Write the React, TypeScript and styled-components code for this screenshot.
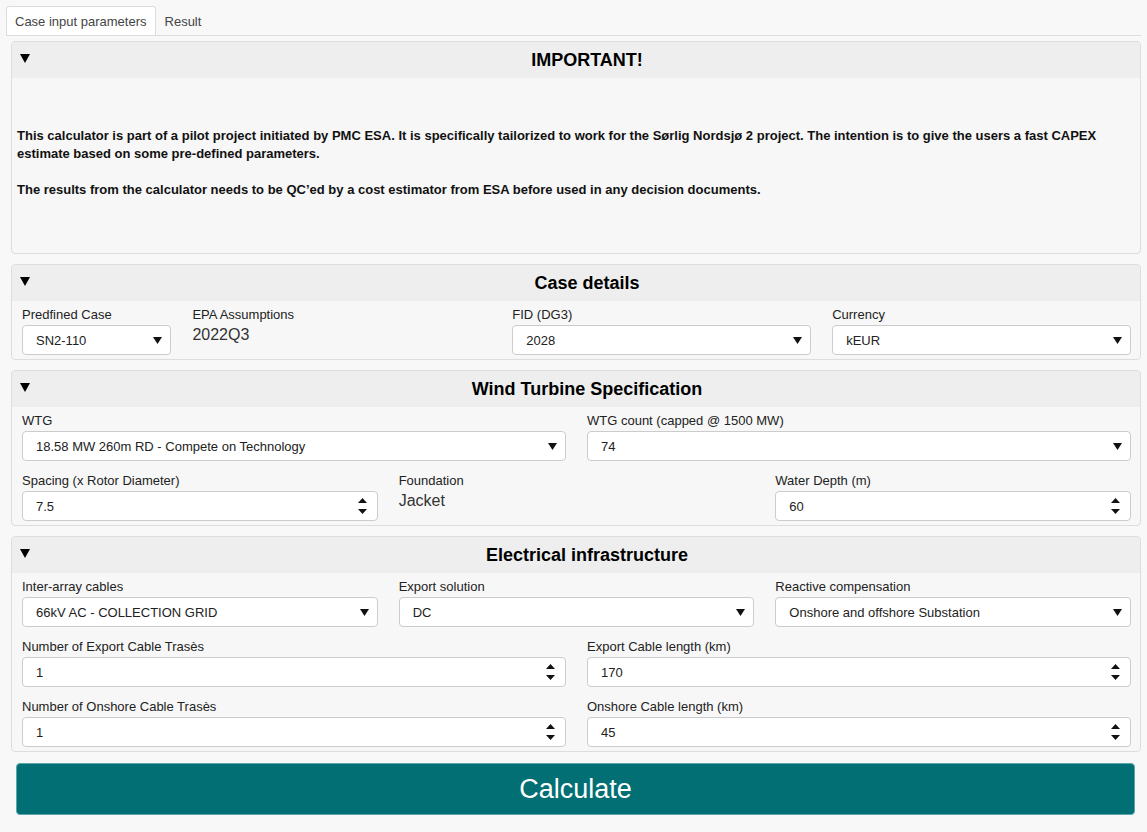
import React from "react";
import styled, { createGlobalStyle } from "styled-components";

const GlobalStyle = createGlobalStyle`
  body {
    margin: 0;
    background: #f8f8f8;
    font-family: "Liberation Sans", Arial, sans-serif;
    color: #222;
  }
`;

const Page = styled.div`
  width: 1147px;
  padding-top: 6px;
  box-sizing: border-box;
`;

const TabList = styled.div`
  display: flex;
  margin: 0 6px;
  border-bottom: 1px solid #dddddd;
  height: 29px;
`;

const Tab = styled.div<{ active?: boolean }>`
  display: flex;
  align-items: center;
  padding: 0 8px;
  font-size: 13px;
  color: #444;
  background: ${({ active }) => (active ? "#ffffff" : "transparent")};
  border: 1px solid ${({ active }) => (active ? "#dddddd" : "transparent")};
  border-bottom: none;
  border-radius: 3px 3px 0 0;
  margin-bottom: -1px;
  height: 29px;
  box-sizing: border-box;
`;

const Content = styled.div`
  padding: 5px 6px 0 11px;
  display: flex;
  flex-direction: column;
  gap: 10px;
`;

const Panel = styled.div`
  border: 1px solid #dddddd;
  border-radius: 4px;
  background: #f7f7f7;
  overflow: hidden;
`;

const PanelHeader = styled.div`
  height: 36px;
  background: #eeeeee;
  display: flex;
  align-items: center;
  padding-left: 8px;
  color: #000;
`;

const Caret = styled.svg`
  flex: none;
  margin-top: -3px;
  margin-right: 4px;
`;

const PanelTitle = styled.div`
  flex: 1;
  text-align: center;
  font-size: 18px;
  font-weight: bold;
`;

const Notice = styled.div`
  padding: 49px 5px 54px;
  font-size: 13px;
  font-weight: bold;
  line-height: 18px;
  color: #111;
  p {
    margin: 0;
  }
  p + p {
    margin-top: 18px;
  }
`;

const PanelBody = styled.div`
  padding: 6px 9px 4px 10px;
  display: flex;
  flex-direction: column;
  gap: 12px;
`;

const Row = styled.div<{ cols: string }>`
  display: grid;
  grid-template-columns: ${({ cols }) => cols};
  column-gap: 21px;
`;

const Field = styled.div`
  display: flex;
  flex-direction: column;
  min-width: 0;
`;

const Label = styled.div`
  font-size: 13px;
  line-height: 16px;
  margin-bottom: 2px;
  color: #222;
`;

const Value = styled.div`
  font-size: 16px;
  line-height: 18px;
  color: #333;
  margin-top: 1px;
`;

const Box = styled.div`
  display: flex;
  align-items: center;
  height: 30px;
  box-sizing: border-box;
  background: #ffffff;
  border: 1px solid #cccccc;
  border-radius: 4px;
  padding-right: 8px;
`;

const NativeSelect = styled.select`
  appearance: none;
  flex: 1;
  min-width: 0;
  height: 100%;
  border: none;
  background: transparent;
  padding: 0 0 0 13px;
  font-family: inherit;
  font-size: 13px;
  color: #222;
  outline: none;
`;

const NumberBox = styled.input`
  flex: 1;
  min-width: 0;
  height: 100%;
  border: none;
  background: transparent;
  padding: 0 0 0 13px;
  font-family: inherit;
  font-size: 13px;
  color: #222;
  outline: none;
`;

const Spinner = styled.div`
  display: flex;
  flex-direction: column;
  gap: 6px;
  margin-right: 2px;
`;

const CalcButton = styled.button`
  margin: 1px 6px 0 5px;
  height: 52px;
  background: #016f74;
  border: 1px solid #5aa6a9;
  border-radius: 4px;
  color: #ffffff;
  font-family: inherit;
  font-size: 27px;
  cursor: pointer;
`;

const Arrow = () => (
  <svg width="9" height="7" viewBox="0 0 9 7">
    <path d="M0 0H9L4.5 7Z" fill="#111" />
  </svg>
);

const Up = () => (
  <svg width="9" height="5" viewBox="0 0 9 5">
    <path d="M0 5H9L4.5 0Z" fill="#111" />
  </svg>
);

const Down = () => (
  <svg width="9" height="5" viewBox="0 0 9 5">
    <path d="M0 0H9L4.5 5Z" fill="#111" />
  </svg>
);

const Select = ({ label, value }: { label: string; value: string }) => (
  <Field>
    <Label>{label}</Label>
    <Box>
      <NativeSelect defaultValue={value}>
        <option>{value}</option>
      </NativeSelect>
      <Arrow />
    </Box>
  </Field>
);

const NumberInput = ({ label, value }: { label: string; value: string }) => (
  <Field>
    <Label>{label}</Label>
    <Box>
      <NumberBox type="text" defaultValue={value} />
      <Spinner>
        <Up />
        <Down />
      </Spinner>
    </Box>
  </Field>
);

const Static = ({ label, value }: { label: string; value: string }) => (
  <Field>
    <Label>{label}</Label>
    <Value>{value}</Value>
  </Field>
);

const Section = ({
  title,
  children,
}: {
  title: string;
  children: React.ReactNode;
}) => (
  <Panel>
    <PanelHeader>
      <Caret width="10" height="9" viewBox="0 0 10 9">
        <path d="M0 0H10L5 9Z" fill="#000" />
      </Caret>
      <PanelTitle>{title}</PanelTitle>
    </PanelHeader>
    {children}
  </Panel>
);

export default function App() {
  return (
    <Page>
      <GlobalStyle />
      <TabList>
        <Tab active>Case input parameters</Tab>
        <Tab>Result</Tab>
      </TabList>
      <Content>
        <Section title="IMPORTANT!">
          <Notice>
            <p>
              This calculator is part of a pilot project initiated by PMC ESA. It is
              specifically tailorized to work for the Sørlig Nordsjø 2 project. The
              intention is to give the users a fast CAPEX estimate based on some
              pre-defined parameters.
            </p>
            <p>
              The results from the calculator needs to be QC’ed by a cost estimator
              from ESA before used in any decision documents.
            </p>
          </Notice>
        </Section>

        <Section title="Case details">
          <PanelBody>
            <Row cols="1fr 2fr 2fr 2fr">
              <Select label="Predfined Case" value="SN2-110" />
              <Static label="EPA Assumptions" value="2022Q3" />
              <Select label="FID (DG3)" value="2028" />
              <Select label="Currency" value="kEUR" />
            </Row>
          </PanelBody>
        </Section>

        <Section title="Wind Turbine Specification">
          <PanelBody>
            <Row cols="1fr 1fr">
              <Select label="WTG" value="18.58 MW 260m RD - Compete on Technology" />
              <Select label="WTG count (capped @ 1500 MW)" value="74" />
            </Row>
            <Row cols="1fr 1fr 1fr">
              <NumberInput label="Spacing (x Rotor Diameter)" value="7.5" />
              <Static label="Foundation" value="Jacket" />
              <NumberInput label="Water Depth (m)" value="60" />
            </Row>
          </PanelBody>
        </Section>

        <Section title="Electrical infrastructure">
          <PanelBody>
            <Row cols="1fr 1fr 1fr">
              <Select label="Inter-array cables" value="66kV AC - COLLECTION GRID" />
              <Select label="Export solution" value="DC" />
              <Select label="Reactive compensation" value="Onshore and offshore Substation" />
            </Row>
            <Row cols="1fr 1fr">
              <NumberInput label="Number of Export Cable Trasès" value="1" />
              <NumberInput label="Export Cable length (km)" value="170" />
            </Row>
            <Row cols="1fr 1fr">
              <NumberInput label="Number of Onshore Cable Trasès" value="1" />
              <NumberInput label="Onshore Cable length (km)" value="45" />
            </Row>
          </PanelBody>
        </Section>

        <CalcButton>Calculate</CalcButton>
      </Content>
    </Page>
  );
}
